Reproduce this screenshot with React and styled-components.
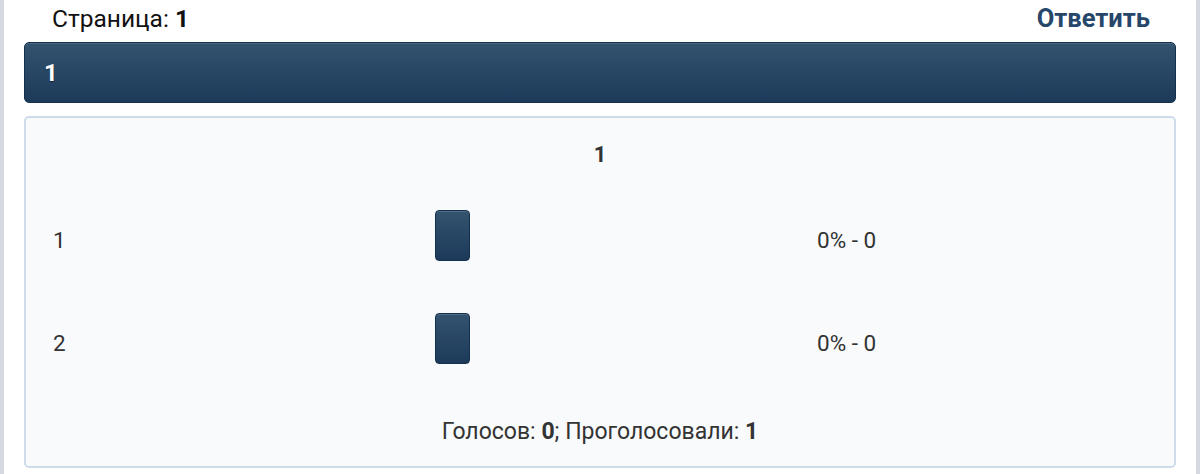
import React from 'react'
import styled, { createGlobalStyle } from 'styled-components'

const options = [
  { label: '1', percent: 0, votes: 0 },
  { label: '2', percent: 0, votes: 0 }
]

const App = () => (
  <>
    <GlobalStyle />
    <Page>
      <Content>
        <TopBar>
          <PageInfo>
            Страница: <b>1</b>
          </PageInfo>
          <ReplyLink href='#'>Ответить</ReplyLink>
        </TopBar>

        <TitleBar>1</TitleBar>

        <PollPanel>
          <Question>1</Question>
          <Options>
            {options.map(o => (
              <OptionRow key={o.label}>
                <OptionText>{o.label}</OptionText>
                <BarCell>
                  <Bar />
                </BarCell>
                <OptionText>
                  {o.percent}% - {o.votes}
                </OptionText>
              </OptionRow>
            ))}
          </Options>
          <Summary>
            Голосов: <b>0</b>; Проголосовали: <b>1</b>
          </Summary>
        </PollPanel>
      </Content>
    </Page>
  </>
)

const GlobalStyle = createGlobalStyle`
  html, body {
    margin: 0;
    padding: 0;
    background: #d6dae0;
  }
  body {
    font-family: Roboto, 'Liberation Sans', sans-serif;
    color: #333;
  }
`

const Page = styled.div`
  margin: 0 4px 0 4px;
  min-height: 474px;
  background: #ffffff;
  padding: 0 20px;
  box-sizing: border-box;
`

const Content = styled.div`
  display: flex;
  flex-direction: column;
`

const TopBar = styled.div`
  display: flex;
  justify-content: space-between;
  align-items: center;
  height: 36px;
  padding: 0 26px 0 28px;
`

const PageInfo = styled.div`
  font-size: 24.5px;
  color: #111;
  b {
    font-weight: 700;
  }
`

const ReplyLink = styled.a`
  font-size: 25.5px;
  font-weight: 700;
  color: #26466a;
  text-decoration: none;
`

const TitleBar = styled.div`
  margin-top: 6px;
  height: 61px;
  box-sizing: border-box;
  display: flex;
  align-items: center;
  padding: 0 19px;
  border: 1px solid #15304d;
  border-radius: 5px;
  background: linear-gradient(to bottom, #33536f 0%, #1d3a5a 100%);
  box-shadow: inset 0 1px 0 rgba(255, 255, 255, 0.12);
  color: #fff;
  font-size: 24px;
  font-weight: 700;
  text-shadow: 0 1px 1px rgba(0, 0, 0, 0.5);
`

const PollPanel = styled.div`
  margin-top: 13px;
  height: 352px;
  box-sizing: border-box;
  border: 2px solid #cddbea;
  border-radius: 5px;
  background: #f8fafc;
  display: flex;
  flex-direction: column;
  padding: 0 19px;
`

const Question = styled.div`
  text-align: center;
  font-size: 22px;
  font-weight: 700;
  color: #333;
  padding-top: 24px;
  height: 29px;
  line-height: 26px;
`

const Options = styled.div`
  display: flex;
  flex-direction: column;
  margin-top: 39px;
  gap: 52px;
`

const OptionRow = styled.div`
  display: grid;
  grid-template-columns: 382px 382px 1fr;
  align-items: center;
  height: 51px;
`

const OptionText = styled.div`
  padding: 9px 0 0 8px;
  font-size: 22.5px;
  color: #333;
`

const BarCell = styled.div`
  padding-left: 8px;
`

const Bar = styled.div`
  width: 35px;
  height: 51px;
  box-sizing: border-box;
  border: 1px solid #14304e;
  border-radius: 4px;
  background: linear-gradient(to bottom, #33536f 0%, #1d3a5a 100%);
  box-shadow: inset 0 1px 0 rgba(255, 255, 255, 0.15);
`

const Summary = styled.div`
  margin-top: 54px;
  text-align: center;
  font-size: 23px;
  color: #333;
  b {
    font-weight: 700;
  }
`

export default App
